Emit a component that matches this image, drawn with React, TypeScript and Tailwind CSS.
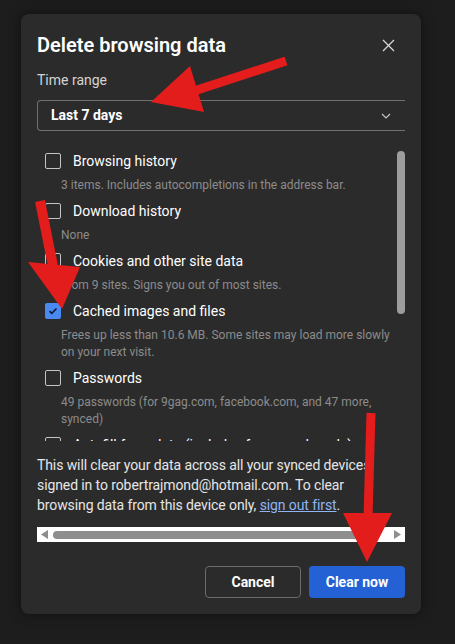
import React from "react";

type Item = { label: string; desc: string; checked?: boolean };

const items: Item[] = [
  { label: "Browsing history", desc: "3 items. Includes autocompletions in the address bar." },
  { label: "Download history", desc: "None" },
  { label: "Cookies and other site data", desc: "From 9 sites. Signs you out of most sites." },
  {
    label: "Cached images and files",
    desc: "Frees up less than 10.6 MB. Some sites may load more slowly on your next visit.",
    checked: true,
  },
  {
    label: "Passwords",
    desc: "49 passwords (for 9gag.com, facebook.com, and 47 more, synced)",
  },
  { label: "Autofill form data (includes forms and cards)", desc: "" },
];

function CheckBox({ checked }: { checked?: boolean }) {
  if (checked) {
    return (
      <span className="w-4 h-4 rounded-[2px] bg-[#4a88f2] flex items-center justify-center shrink-0">
        <svg width="10" height="8" viewBox="0 0 10 8">
          <path d="M1.5 4.2 L3.8 6.3 L8.5 1.5" fill="none" stroke="#0f1a33" strokeWidth="1.6" />
        </svg>
      </span>
    );
  }
  return <span className="w-4 h-4 rounded-[2px] border border-[#c4c4c4] shrink-0" />;
}

function Arrows() {
  // red annotation arrows drawn over the dialog
  return (
    <svg className="absolute inset-0 pointer-events-none" width="455" height="644" viewBox="0 0 455 644">
      <g fill="#e31c1c" stroke="#e31c1c">
        <line x1="286" y1="61" x2="194" y2="91" strokeWidth="9" />
        <polygon points="151,102 190,66 204,112" strokeWidth="0" />
        <line x1="40" y1="201" x2="53" y2="266" strokeWidth="10" />
        <polygon points="28,262 80,267 62,309" strokeWidth="0" />
        <line x1="371" y1="413" x2="368" y2="518" strokeWidth="9" />
        <polygon points="343,513 392,513 367,562" strokeWidth="0" />
      </g>
    </svg>
  );
}

export default function App() {
  return (
    <div className="relative w-[455px] h-[644px] bg-[#1d1d1d] pt-[14px] pl-[21px] font-['Roboto',sans-serif] overflow-hidden">
      <div className="w-[400px] h-[600px] bg-[#2b2b2b] rounded-lg px-4 pb-4 flex flex-col shadow-[0_0_12px_rgba(0,0,0,0.5)]">
        {/* header */}
        <div className="flex items-center justify-between pt-[17px]">
          <h1 className="text-white text-[20px] leading-7 font-semibold">Delete browsing data</h1>
          <svg width="13" height="13" viewBox="0 0 13 13" className="mr-[10px]">
            <path d="M1 1 L12 12 M12 1 L1 12" stroke="#d6d6d6" strokeWidth="1.3" />
          </svg>
        </div>
        <p className="text-[#d4d4d4] text-[14px] leading-5 mt-[11px]">Time range</p>

        <div className="mt-[10px] h-[31px] border border-r-0 border-[#6f6f6f] rounded-l-[4px] flex items-center justify-between pl-[13px] pr-[14px]">
          <span className="text-white text-[14px] font-bold">Last 7 days</span>
          <svg width="10" height="6" viewBox="0 0 10 6">
            <path d="M1 1 L5 5 L9 1" fill="none" stroke="#c4c4c4" strokeWidth="1.2" />
          </svg>
        </div>

        {/* options list */}
        <div className="relative mt-[11px] h-[299px] overflow-hidden pt-[7px] pl-2 pr-3">
          {items.map((it) => (
            <div key={it.label} className="mb-[5px]">
              <div className="h-6 flex items-center gap-3">
                <CheckBox checked={it.checked} />
                <span className="text-white text-[14px] whitespace-nowrap">{it.label}</span>
              </div>
              {it.desc && (
                <p className="mt-1 pl-4 text-[#8c8c8c] text-[12px] leading-[17px]">{it.desc}</p>
              )}
            </div>
          ))}
          <div className="absolute right-0 top-[9px] w-2 h-[163px] rounded-full bg-[#9d9d9d]" />
        </div>

        <p className="mt-[14px] pr-[32px] text-[#e6e6e6] text-[14px] leading-5 tracking-[-0.1px]">
          This will clear your data across all your synced devices signed in to robertrajmond@hotmail.com. To clear
          browsing data from this device only,{" "}
          <span className="text-[#8fb5f5] underline">sign out first</span>.
        </p>

        {/* horizontal scrollbar */}
        <div className="mt-[12px] h-[15px] bg-white flex items-center px-[4px] gap-[5px]">
          <svg width="7" height="9" viewBox="0 0 7 9">
            <path d="M7 0 L0 4.5 L7 9 Z" fill="#8e8e8e" />
          </svg>
          <div className="flex-1 h-[8px] rounded-full bg-[#8e8e8e] mr-[14px]" />
          <svg width="7" height="9" viewBox="0 0 7 9">
            <path d="M0 0 L7 4.5 L0 9 Z" fill="#8e8e8e" />
          </svg>
        </div>

        <div className="mt-auto flex justify-end gap-2">
          <button className="w-24 h-[32px] rounded-[4px] border border-[#6b6b6b] text-white text-[14px] font-bold">
            Cancel
          </button>
          <button className="w-24 h-[32px] rounded-[4px] bg-[#2361d4] text-white text-[14px] font-bold">
            Clear now
          </button>
        </div>
      </div>
      <Arrows />
    </div>
  );
}
